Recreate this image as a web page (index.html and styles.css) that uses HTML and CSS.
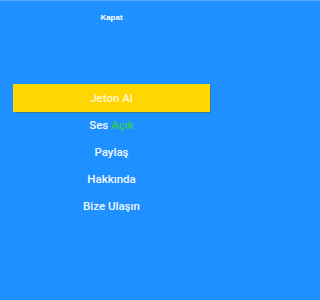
FILE: index.html
```html
<!DOCTYPE html>
<html lang="tr">
<head>
<meta charset="utf-8">
<link rel="stylesheet" href="styles.css">
</head>
<body>
<div class="screen">
  <div class="close">Kapat</div>
  <nav class="menu">
    <div class="item primary">Jeton Al</div>
    <div class="item">Ses <span class="on">Açık</span></div>
    <div class="item">Paylaş</div>
    <div class="item">Hakkında</div>
    <div class="item">Bize Ulaşın</div>
  </nav>
</div>
</body>
</html>
```
FILE: styles.css
```css
html, body {
  margin: 0;
  padding: 0;
  background: #1e90ff;
}
body {
  border-top: 1px solid #5aaaff;
  min-height: 299px;
}
.screen {
  width: 223px;
  background: #1e90ff;
  color: #fff;
  font-family: Roboto, "Liberation Sans", sans-serif;
}
.close {
  padding-top: 12px;
  text-align: center;
  font-family: "Liberation Sans", Arial, sans-serif;
  font-weight: bold;
  font-size: 8px;
  line-height: 10px;
}
.menu {
  margin-top: 61px;
  display: flex;
  flex-direction: column;
}
.item {
  text-align: center;
  font-size: 11.5px;
  font-weight: 500;
  line-height: 27px;
  color: #f4f8ff;
}
.item.primary {
  margin: 0 13px;
  height: 28px;
  line-height: 28px;
  background: #ffd700;
  color: #fff8d8;
  box-shadow: 0 0 1px 0.5px rgba(90, 100, 80, 0.55);
}
.on {
  color: #33cc55;
}
```
